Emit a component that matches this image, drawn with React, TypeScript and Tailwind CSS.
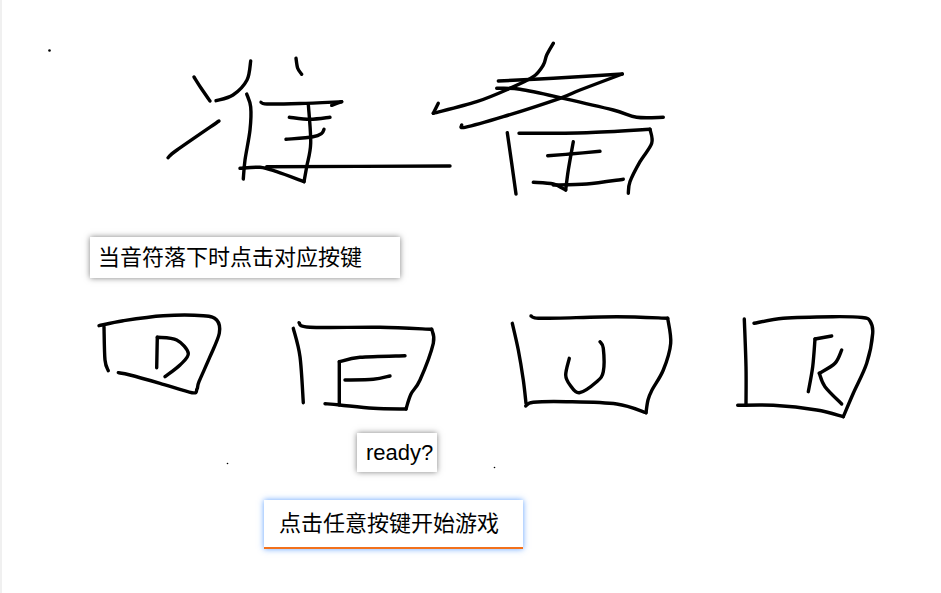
const strokes: number[][][] = [
  // 准
  [[194, 77], [201, 88], [210, 101]],
  [[250.7, 61], [247, 80], [233, 95], [216, 100.7]],
  [[219, 121], [177, 150], [168, 157.7]],
  [[246.7, 94], [250.7, 107], [250, 130], [245, 160], [243.3, 179]],
  [[296, 58.3], [297.7, 68.3], [301.7, 74.3]],
  [[261, 102.3], [267, 104], [300, 103.5], [341.7, 101.7]],
  [[341.7, 101.7], [331.7, 105.3]],
  [[289.3, 117.3], [310, 119.3], [330, 117.3]],
  [[286, 139.3], [313, 136.7], [321.7, 133.3], [324, 129.3]],
  [[308.3, 104], [310.7, 143], [306.7, 166.7], [304, 181.7]],
  [[304, 181.7], [276.7, 171.7], [260, 167.3], [240, 168.3]],
  [[266.7, 166.7], [450, 166]],
  // 备
  [[553.3, 43.3], [546.7, 55], [543.3, 65], [533.3, 76.7], [510, 88.3], [476.7, 101.7], [433.3, 113.3]],
  [[433.3, 113.3], [438.3, 103.3]],
  [[498.3, 81], [553.3, 78.3], [622.3, 74]],
  [[622.3, 74], [580, 90], [560, 98.3], [503.3, 116.7], [465, 127.3], [461.7, 125]],
  [[496.7, 88.3], [520, 89.3], [563.3, 98.3], [613.3, 110], [636.7, 117.3], [663.3, 117.3]],
  [[507.3, 132.7], [511.7, 163.3], [516, 194]],
  [[519, 133.3], [586.7, 132.7], [650, 129.3]],
  [[650, 129.3], [651.7, 143.3], [640, 161.7], [630, 181.7], [628.3, 193.3]],
  [[547.7, 155.7], [570, 154], [600, 151.3]],
  [[573.3, 141.7], [568.3, 170], [565.7, 190]],
  [[565.7, 190], [553.3, 184], [533.3, 182.3]],
  [[553.3, 185], [586.7, 184], [623.3, 179.3]],
  // D
  [[99, 325.7], [123.3, 320.7], [163.3, 315.7], [203.3, 315.7], [216.7, 320], [219.3, 333.3], [210, 356.7], [199, 381.7], [197, 389], [192, 392.7], [160, 383.3], [130, 375], [118.3, 372.7]],
  [[104, 326.7], [105, 360], [108.3, 370.7]],
  [[156.7, 367.7], [157.3, 337.3]],
  [[157.3, 337.3], [176.7, 340], [188.3, 353.3], [180, 365], [165, 376.7]],
  // F
  [[299, 322.7], [310, 327.3], [380, 327.3], [431.7, 329.3]],
  [[431.7, 329.3], [433.3, 343.3], [420, 380], [411, 394], [406, 409]],
  [[406, 409], [373.3, 408.3], [340, 405], [325, 403.7]],
  [[293.3, 328.3], [300, 356.7], [303.3, 402.7]],
  [[339.3, 405], [339.3, 361.7]],
  [[339.3, 361.7], [360, 357.3], [405, 355.7]],
  [[345, 380], [373.3, 379.3], [390, 376]],
  // U
  [[531, 316], [543.3, 318.3], [616.7, 316.7], [667.7, 318.3]],
  [[667.7, 318.3], [670.7, 343.3], [663.3, 370], [652, 390], [648, 400], [646, 412.7]],
  [[646, 412.7], [616.7, 404], [566.7, 401.7], [533.3, 402.3], [525.7, 406]],
  [[512.3, 323.3], [518.3, 350], [523.3, 380], [526, 403.3]],
  [[569.3, 358.3], [565.7, 375], [570, 385], [579.3, 392.7], [596.7, 381.7], [603.3, 371.7], [603.3, 348.3], [600, 341.7]],
  // R
  [[754, 323.3], [783.3, 318.3], [833, 316.7], [862, 317.5], [870, 321], [872.7, 333.3], [866.7, 363.3], [853.3, 393.3], [843.3, 416.7]],
  [[843.3, 416.7], [816.7, 410], [773.3, 405.3], [737.7, 405.3]],
  [[744.3, 319], [746, 366.7], [746, 405.3]],
  [[831.7, 336], [815, 339]],
  [[815, 339], [812.7, 366.7], [808.3, 391.7]],
  [[841.7, 350], [835, 363.3], [819.3, 373.3]],
  [[819.3, 373.3], [825, 386.7], [841.7, 404]],
]

// catmull-rom through the sampled points, looks like a mouse drawn line
function toPath(pts: number[][]) {
  let d = `M${pts[0][0]} ${pts[0][1]}`
  for (let i = 0; i < pts.length - 1; i++) {
    const p0 = pts[i - 1] || pts[i]
    const p1 = pts[i]
    const p2 = pts[i + 1]
    const p3 = pts[i + 2] || p2
    const c1x = p1[0] + (p2[0] - p0[0]) / 6
    const c1y = p1[1] + (p2[1] - p0[1]) / 6
    const c2x = p2[0] - (p3[0] - p1[0]) / 6
    const c2y = p2[1] - (p3[1] - p1[1]) / 6
    d += ` C${c1x} ${c1y} ${c2x} ${c2y} ${p2[0]} ${p2[1]}`
  }
  return d
}

const font = "font-['Liberation_Sans','Noto_Sans_CJK_SC',sans-serif]"

function App() {
  return (
    <div className={`relative h-[593px] w-[941px] overflow-hidden bg-white border-l-2 border-[#f0f0f0] text-black ${font}`}>
      {/* hand drawn canvas */}
      <svg className="absolute left-[-2px] top-0" width="941" height="593" viewBox="0 0 941 593" fill="none">
        {strokes.map((s, i) => (
          <path key={i} d={toPath(s)} stroke="#000" strokeWidth="3.4" strokeLinecap="round" strokeLinejoin="round" />
        ))}
        <circle cx="49.5" cy="50.5" r="1.3" fill="#000" />
        <circle cx="227.5" cy="463.5" r="0.8" fill="#000" />
        <circle cx="494.5" cy="467.5" r="0.8" fill="#000" />
      </svg>

      <div className="relative flex flex-col items-start pt-[237px]">
        <div className="ml-[88px] flex h-[41px] w-[310px] items-center bg-white pl-[8px] text-[22px] shadow-[0_0_6px_rgba(0,0,0,0.5)]">
          当音符落下时点击对应按键
        </div>
        <div className="ml-[355px] mt-[155px] flex h-[39px] w-[80px] items-center bg-white pl-[9px] text-[22px] shadow-[0_0_6px_rgba(0,0,0,0.5)]">
          ready?
        </div>
        <button className="ml-[262px] mt-[28px] flex h-[49px] w-[259px] items-center border-b-2 border-[#f2711c] bg-white pl-[15px] text-[22px] shadow-[0_0_6px_rgba(60,140,255,0.8)]">
          点击任意按键开始游戏
        </button>
      </div>
    </div>
  )
}

export default App
